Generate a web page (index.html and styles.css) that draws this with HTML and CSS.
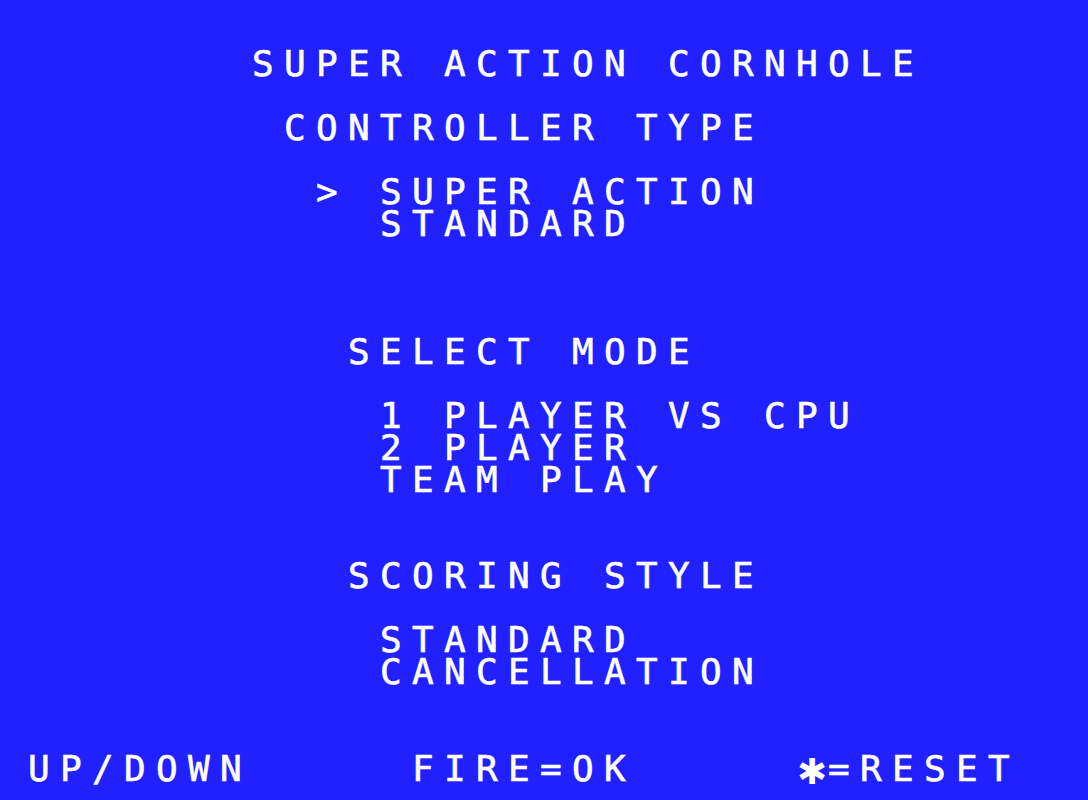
FILE: index.html
```html
<!DOCTYPE html>
<html lang="en">
<head>
    <meta charset="UTF-8">
    <title>Super Action Cornhole</title>
    <link rel="stylesheet" href="styles.css">
</head>
<body>
<div class="screen">
    <div class="line">       SUPER ACTION CORNHOLE</div>
    <div class="line"></div>
    <div class="line">        CONTROLLER TYPE</div>
    <div class="line"></div>
    <div class="line">         &gt; SUPER ACTION</div>
    <div class="line">           STANDARD</div>
    <div class="line"></div>
    <div class="line"></div>
    <div class="line"></div>
    <div class="line">          SELECT MODE</div>
    <div class="line"></div>
    <div class="line">           1 PLAYER VS CPU</div>
    <div class="line">           2 PLAYER</div>
    <div class="line">           TEAM PLAY</div>
    <div class="line"></div>
    <div class="line"></div>
    <div class="line">          SCORING STYLE</div>
    <div class="line"></div>
    <div class="line">           STANDARD</div>
    <div class="line">           CANCELLATION</div>
    <div class="line"></div>
    <div class="line"></div>
    <div class="line">UP/DOWN     FIRE=OK     <span class="star">✱</span>=RESET</div>
</div>
</body>
</html>
```

FILE: styles.css
```css
html, body {
    margin: 0;
    padding: 0;
    background-color: #2121ff;
}
.screen {
    width: 1088px;
    height: 800px;
    overflow: hidden;
    box-sizing: border-box;
    padding: 48px 0 0 28px;
    background-color: #2121ff;
    font-family: "DejaVu Sans Mono", monospace;
    font-size: 36px;
    letter-spacing: 10.33px;
    color: #ffffff;
    -webkit-text-stroke: 0.6px #ffffff;
}
.line {
    height: 32px;
    line-height: 32px;
    white-space: pre;
}
.star {
    display: inline-block;
    width: 32px;
    font-size: 46px;
    letter-spacing: 0;
    text-align: center;
    vertical-align: -3px;
    -webkit-text-stroke: 0;
}
```
